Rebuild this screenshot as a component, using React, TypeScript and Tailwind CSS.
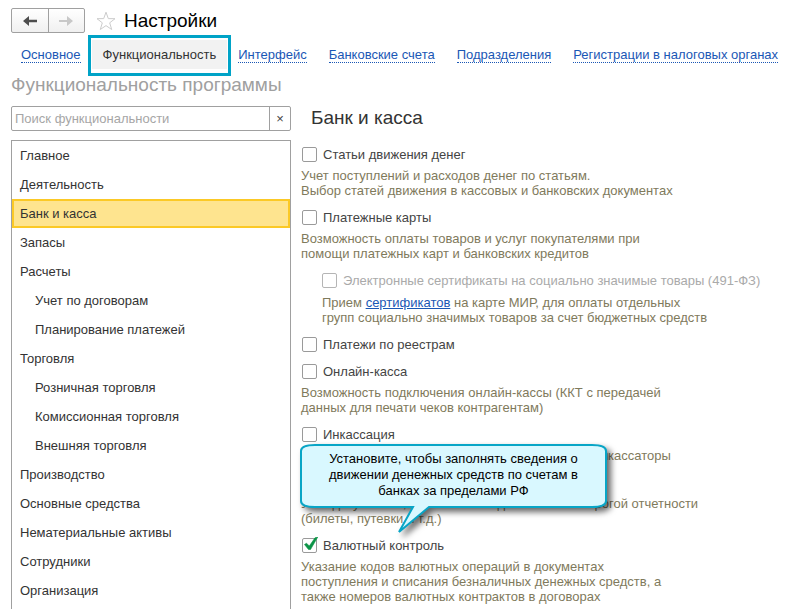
import type { ReactNode } from "react";
import { clsx } from "clsx";

const tabs = ["Основное", "Функциональность", "Интерфейс", "Банковские счета", "Подразделения", "Регистрации в налоговых органах"];

const sections = [
  { label: "Главное" },
  { label: "Деятельность" },
  { label: "Банк и касса", active: true },
  { label: "Запасы" },
  { label: "Расчеты" },
  { label: "Учет по договорам", nested: true },
  { label: "Планирование платежей", nested: true },
  { label: "Торговля" },
  { label: "Розничная торговля", nested: true },
  { label: "Комиссионная торговля", nested: true },
  { label: "Внешняя торговля", nested: true },
  { label: "Производство" },
  { label: "Основные средства" },
  { label: "Нематериальные активы" },
  { label: "Сотрудники" },
  { label: "Организация" },
];

type OptionProps = {
  id: string;
  label: string;
  checked?: boolean;
  disabled?: boolean;
  nested?: boolean;
  children?: ReactNode;
};

function Option({ id, label, checked, disabled, nested, children }: OptionProps) {
  return (
    <div className={clsx(nested && "pl-[21px]")}>
      <div className={clsx("flex items-center", !nested && "pl-px")}>
        <span className="relative h-[15px] w-[15px] shrink-0">
          <input
            id={id}
            type="checkbox"
            defaultChecked={checked}
            disabled={disabled}
            className={clsx(
              "peer block h-[15px] w-[15px] appearance-none rounded-[2px] border bg-white",
              disabled ? "border-[#b5b5b5]" : "border-[#9a9a9a]"
            )}
          />
          <svg
            viewBox="0 0 16 16"
            className="pointer-events-none absolute -top-px left-0 hidden h-4 w-4 peer-checked:block"
          >
            <path d="M2.5 7.5 L4.5 6.2 L7.3 9 L13 0.8 L15.8 0 L8.5 12.5 L6.5 12.5 Z" fill="#0b9447" stroke="#0b9447" strokeWidth="0.6" />
          </svg>
        </span>
        <label htmlFor={id} className={clsx("ml-1.5 whitespace-nowrap", disabled ? "text-[#aaaaaa]" : "text-[#444444]")}>
          {label}
        </label>
      </div>
      {children && (
        <p className={clsx("whitespace-nowrap text-[#7f7a5c]", nested ? "mt-[7px]" : "mt-1.5")}>{children}</p>
      )}
    </div>
  );
}

function Hint() {
  return (
    <div className="absolute bottom-full left-[-2px] h-[95px] w-[309px]">
      <svg viewBox="0 0 309 95" className="absolute inset-0 h-full w-full overflow-visible">
        <path
          d="M16 2 H293 Q307 2 307 8 V58 Q307 64 293 64 H130 L100 89 L114 64 H16 Q2 64 2 58 V8 Q2 2 16 2 Z"
          fill="#d9f8ff"
          stroke="#08a5c6"
          strokeWidth="2"
          className="drop-shadow-[4px_4px_3px_rgba(0,0,0,0.6)]"
        />
      </svg>
      <p className="relative px-4 pt-2 text-center leading-4 text-black">
        Установите, чтобы заполнять сведения о движении денежных средств по счетам в банках за пределами РФ
      </p>
    </div>
  );
}

export default function App() {
  return (
    <div
      className="flex h-screen flex-col overflow-hidden bg-white text-[13px] leading-[15px] text-[#333333]"
      style={{ fontFamily: '"Liberation Sans", Arial, sans-serif' }}
    >
      <header className="flex items-center px-[11px] pt-2">
        <div className="flex h-[25px] w-[74px] rounded-[2px] border border-[#a0a0a0] bg-gradient-to-b from-white to-[#f0f0f0]">
          <button aria-label="Назад" className="flex flex-1 items-center justify-center border-r border-[#a0a0a0] text-[#4d4d4d]">
            <svg viewBox="0 0 14 10" className="h-2.5 w-3.5">
              <path d="M0 5 L6 0 V3.7 H14 V6.3 H6 V10 Z" fill="currentColor" />
            </svg>
          </button>
          <button aria-label="Вперед" className="flex flex-1 items-center justify-center text-[#c8c8c8]">
            <svg viewBox="0 0 14 10" className="h-2.5 w-3.5">
              <path d="M14 5 L8 0 V4 H0 V6 H8 V10 Z" fill="currentColor" />
            </svg>
          </button>
        </div>
        <button aria-label="В избранное" className="ml-[11px]">
          <svg viewBox="0 0 20 20" className="h-5 w-5">
            <path
              d="M10 1.2 L12.3 7.6 L19 7.7 L13.7 11.8 L15.7 18.5 L10 14.6 L4.3 18.5 L6.3 11.8 L1 7.7 L7.7 7.6 Z"
              fill="white"
              stroke="#cccccc"
            />
          </svg>
        </button>
        <h1 className="ml-2 text-[19px] leading-6 text-black">Настройки</h1>
      </header>

      <nav className="mt-[7px] flex items-center pl-2.5">
        {tabs.map((tab) =>
          tab === "Функциональность" ? (
            <a key={tab} href="#" aria-current="page" className="relative bg-[#f2f2f2] px-[11px] py-[7px] text-[#333333]">
              {tab}
              {/* рамка-выделение вокруг текущей вкладки */}
              <span className="absolute -inset-x-1 -top-[5px] -bottom-[7px] border-3 border-[#00a3c7]" />
            </a>
          ) : (
            <a key={tab} href="#" className="mx-[11px] border-b border-dotted border-[#1a57b5] whitespace-nowrap text-[#1a57b5]">
              {tab}
            </a>
          )
        )}
      </nav>

      <h2 className="mt-1 pl-[11px] text-[19px] leading-6 text-[#a0a0a0]">Функциональность программы</h2>

      <div className="mt-[9px] flex min-h-0 flex-1 pl-[11px]">
        <aside className="flex w-[280px] shrink-0 flex-col">
          <div className="flex h-[25px] shrink-0 rounded-[2px] border border-[#a0a0a0]">
            <input
              type="text"
              aria-label="Поиск функциональности"
              placeholder="Поиск функциональности"
              className="min-w-0 flex-1 px-[3px] outline-none placeholder:text-[#a6a6a6]"
            />
            <button aria-label="Очистить" className="w-[21px] border-l border-[#a0a0a0] text-[#444444]">
              ×
            </button>
          </div>
          <ul className="mt-[9px] flex-1 border border-b-0 border-[#a0a0a0]">
            {sections.map((s) => (
              <li key={s.label}>
                <button
                  className={clsx(
                    "block h-[29px] w-full border-2 text-left",
                    s.active ? "border-[#fbc926] bg-[#fee48f]" : "border-transparent",
                    s.nested ? "pl-[21px]" : "pl-1.5"
                  )}
                >
                  {s.label}
                </button>
              </li>
            ))}
          </ul>
        </aside>

        <main className="ml-[10px] min-w-0 flex-1">
          <h3 className="pl-2.5 text-[19px] leading-6">Банк и касса</h3>
          <div className="mt-[17px] flex flex-col gap-3">
            <Option id="articles" label="Статьи движения денег">
              Учет поступлений и расходов денег по статьям.
              <br />
              Выбор статей движения в кассовых и банковских документах
            </Option>
            <Option id="cards" label="Платежные карты">
              Возможность оплаты товаров и услуг покупателями при
              <br />
              помощи платежных карт и банковских кредитов
            </Option>
            <Option id="certificates" label="Электронные сертификаты на социально значимые товары (491-ФЗ)" disabled nested>
              Прием <a href="#" className="text-[#1a57b5] underline">сертификатов</a> на карте МИР, для оплаты отдельных
              <br />
              групп социально значимых товаров за счет бюджетных средств
            </Option>
            <Option id="registries" label="Платежи по реестрам" />
            <Option id="online" label="Онлайн-касса">
              Возможность подключения онлайн-кассы (ККТ с передачей
              <br />
              данных для печати чеков контрагентам)
            </Option>
            <Option id="collection" label="Инкассация">
              Сдача наличных в банк, которую осуществляют инкассаторы
            </Option>
            <Option id="documents" label="Денежные документы">
              Учет документов, хранения и выдачи бланков строгой отчетности
              <br />
              (билеты, путевки и т.д.)
            </Option>
            <div className="relative">
              <Option id="currency" label="Валютный контроль" checked>
                Указание кодов валютных операций в документах
                <br />
                поступления и списания безналичных денежных средств, а
                <br />
                также номеров валютных контрактов в договорах
              </Option>
              <Hint />
            </div>
          </div>
        </main>
      </div>
    </div>
  );
}
